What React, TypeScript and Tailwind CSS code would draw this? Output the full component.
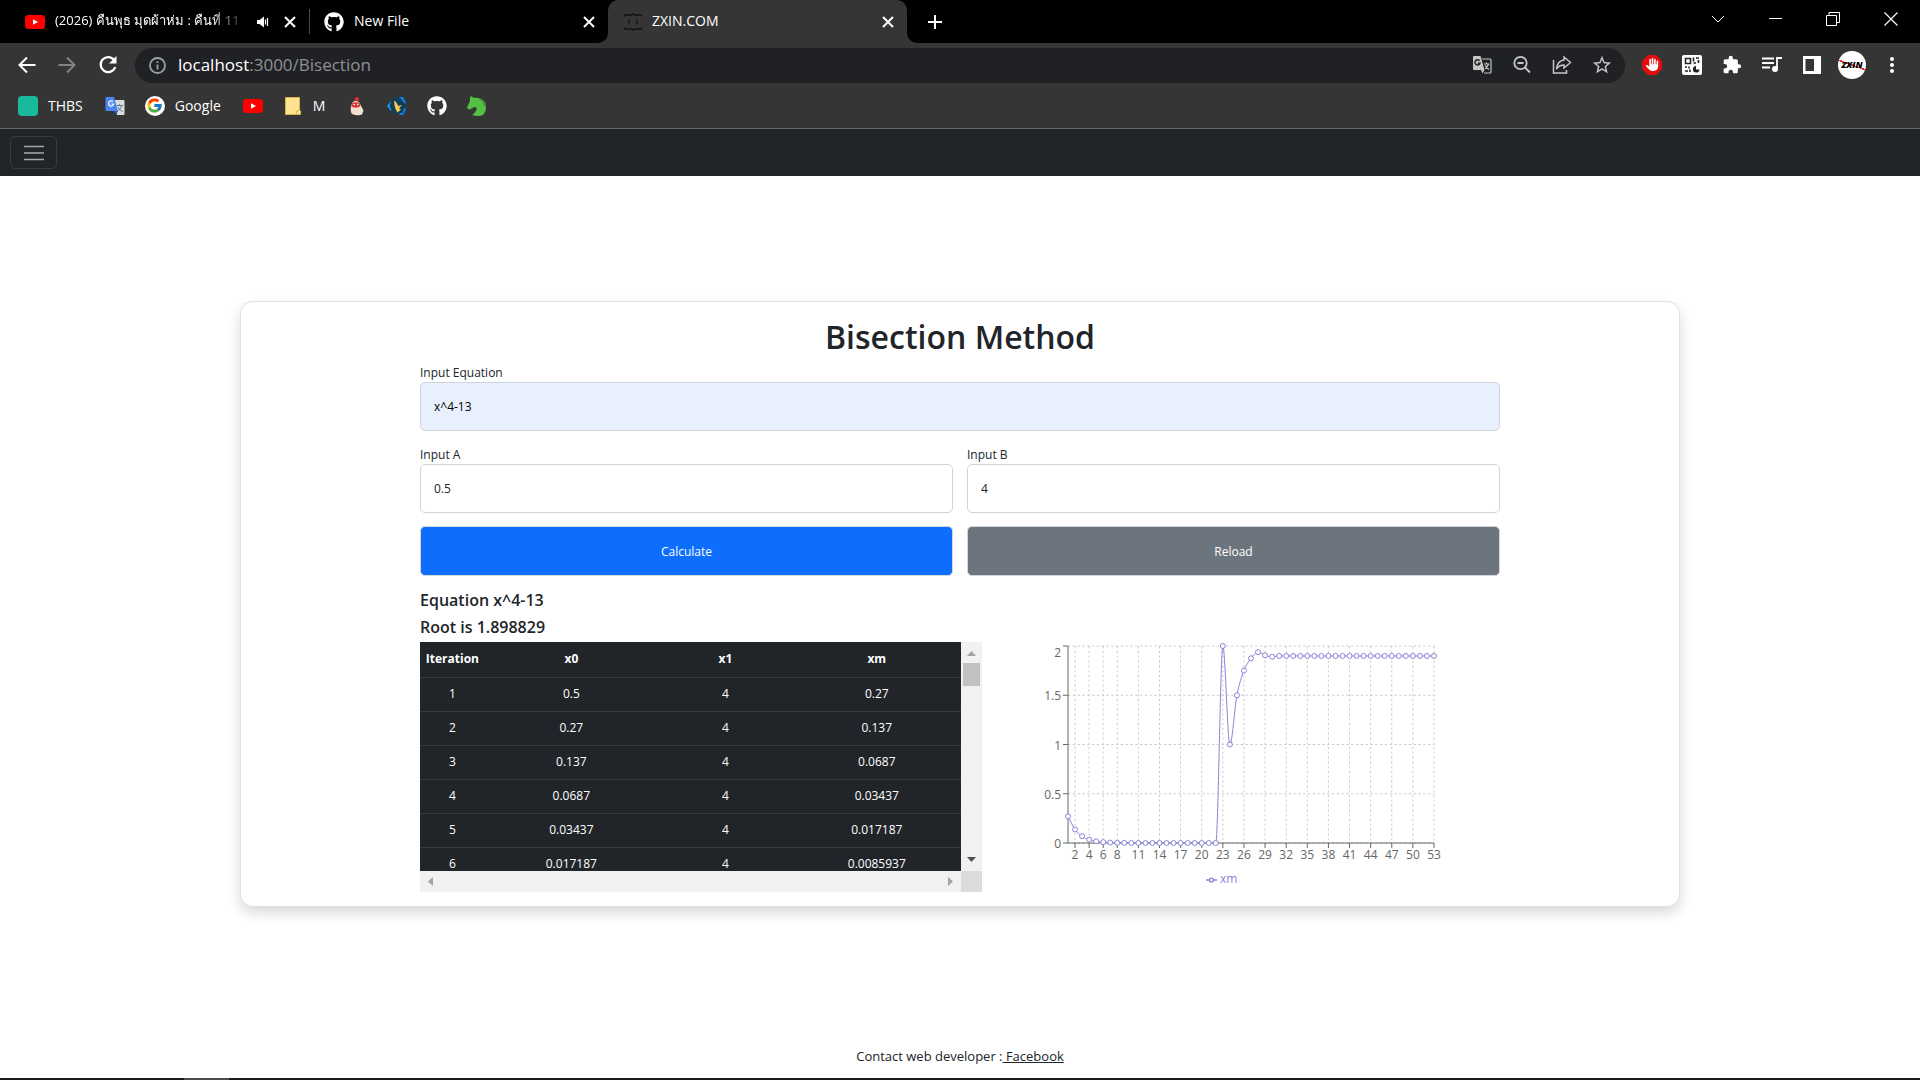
import React from "react";
import { FaGithub, FaHand } from "react-icons/fa6";
import { FcGoogle } from "react-icons/fc";
import { MdExtension, MdStarBorder } from "react-icons/md";

const rows: [string, string, string][] = [
  ["0.5", "4", "0.27"],
  ["0.27", "4", "0.137"],
  ["0.137", "4", "0.0687"],
  ["0.0687", "4", "0.03437"],
  ["0.03437", "4", "0.017187"],
  ["0.017187", "4", "0.0085937"],
];

const series: number[] = [
  0.27, 0.137, 0.0687, 0.03437, 0.017187, 0.0085937, 0.0043, 0.0021, 0.001,
  ...Array(13).fill(0),
  2, 1, 1.5, 1.75, 1.875, 1.9375, 1.90625, 1.890625, 1.8984,
  ...Array(22).fill(1.8988),
];

const xTicks = [2, 4, 6, 8, 11, 14, 17, 20, 23, 26, 29, 32, 35, 38, 41, 44, 47, 50, 53];
const yTicks = [0, 0.5, 1, 1.5, 2];

const LEFT = 66;
const RIGHT = 432;
const TOP = 4;
const BOTTOM = 201;
const px = (n: number) => LEFT + ((n - 1) * (RIGHT - LEFT)) / 52;
const py = (v: number) => BOTTOM - (v * (BOTTOM - TOP)) / 2;

/* Monotone cubic interpolation through the series */
function monotonePath(values: number[]) {
  const pts = values.map((v, i) => [px(i + 1), py(v)]);
  const h = pts[1][0] - pts[0][0];
  const slope = pts.slice(1).map((p, i) => (p[1] - pts[i][1]) / h);
  const m = pts.map((_, i) => {
    if (i === 0) return slope[0];
    if (i === pts.length - 1) return slope[i - 1];
    const a = slope[i - 1];
    const b = slope[i];
    if (a * b <= 0) return 0;
    return Math.sign(a) * 2 * Math.min(Math.abs(a), Math.abs(b), Math.abs(a + b) / 4);
  });
  return pts.reduce((d, p, i) => {
    if (i === 0) return `M${p[0]},${p[1]}`;
    const q = pts[i - 1];
    return `${d}C${q[0] + h / 3},${q[1] + (m[i - 1] * h) / 3} ${p[0] - h / 3},${p[1] - (m[i] * h) / 3} ${p[0]},${p[1]}`;
  }, "");
}

function Chart() {
  return (
    <svg width="444" height="250" viewBox="0 0 444 250" className="text-[12px]" role="img" aria-label="xm per iteration">
      <g stroke="#ccc" strokeDasharray="2.4 2.4" strokeWidth="1">
        {yTicks.map((v) => <line key={v} x1={LEFT} x2={RIGHT} y1={py(v)} y2={py(v)} />)}
        {xTicks.map((n) => <line key={n} x1={px(n)} x2={px(n)} y1={TOP} y2={BOTTOM} />)}
      </g>
      <g stroke="#666">
        <path d={`M${LEFT},${TOP}V${BOTTOM}H${RIGHT}`} fill="none" />
        {yTicks.map((v) => <line key={v} x1={LEFT - 5} x2={LEFT} y1={py(v)} y2={py(v)} />)}
        {xTicks.map((n) => <line key={n} x1={px(n)} x2={px(n)} y1={BOTTOM} y2={BOTTOM + 5} />)}
      </g>
      <g fill="#666">
        {yTicks.map((v) => (
          <text key={v} x={LEFT - 7} y={v === 2 ? 15 : py(v) + 5} textAnchor="end">{v}</text>
        ))}
        {xTicks.map((n) => (
          <text key={n} x={px(n)} y="217" textAnchor="middle">{n}</text>
        ))}
      </g>
      <path d={monotonePath(series)} fill="none" stroke="#8884d8" strokeWidth="1" />
      {series.map((v, i) => (
        <circle key={i} cx={px(i + 1)} cy={py(v)} r="2.5" fill="#fff" stroke="#8884d8" strokeWidth="1" />
      ))}
      <g stroke="#8884d8" strokeWidth="1.4" fill="none">
        <path d="M204,238h3.7M211.3,238h3.7" />
        <circle cx="209.5" cy="238" r="1.9" />
      </g>
      <text x="218" y="241" fill="#8884d8">xm</text>
    </svg>
  );
}

function YouTube() {
  return (
    <svg width="20" height="20" viewBox="0 0 20 20">
      <rect x="0" y="3" width="20" height="14" rx="3.5" fill="#f00" />
      <path d="M8 7.2v5.6l5-2.8z" fill="#fff" />
    </svg>
  );
}

function CloseX() {
  return (
    <svg width="12" height="12" viewBox="0 0 12 12" stroke="#fff" strokeWidth="2">
      <path d="M1 1l10 10M11 1L1 11" />
    </svg>
  );
}

function TranslateBadge() {
  return (
    <svg width="20" height="20" viewBox="0 0 20 20">
      <path d="M8 4h10.500a1 1 0 0 1 1 1v13a1 1 0 0 1-1 1H12z" fill="#dcdcdc" />
      <path d="M11.500 9.500h6.500M14.500 8v1.500M16.500 9.500c-.5 2.500-2 4.500-4 5.500M13 11c1 2 2.500 3.500 4.500 4.500" stroke="#5f7d86" fill="none" />
      <path d="M1.500 1h7.500l4 14H1.500a1 1 0 0 1-1-1V2a1 1 0 0 1 1-1z" fill="#4a86f0" />
      <path d="M9 15h4l-2 4z" fill="#2456b8" />
      <path d="M8 5.700A2.600 2.600 0 1 0 8.700 8H6.300" stroke="#fff" strokeWidth="1.200" fill="none" />
    </svg>
  );
}

function TranslateMono() {
  return (
    <svg width="20" height="20" viewBox="0 0 20 20">
      <path d="M10 4h8a1 1 0 0 1 1 1v12a1 1 0 0 1-1 1h-6" stroke="currentColor" fill="none" strokeWidth="1.200" />
      <path d="M12 9h5.500M14.500 7.500V9M16.500 9c-.5 2-1.500 3.500-3.500 4.500M13 10.500c1 1.800 2 3 4 4" stroke="currentColor" fill="none" strokeWidth="1.200" />
      <path d="M2 1h6.500l4 14H2a1 1 0 0 1-1-1V2a1 1 0 0 1 1-1zM9 15h3.500L10.500 18.500z" fill="currentColor" />
      <path d="M7.600 5.800A2.600 2.600 0 1 0 8 8.200H5.800" stroke="#202124" strokeWidth="1.500" fill="none" />
    </svg>
  );
}

function Tabs() {
  return (
    <div className="flex h-[43px] items-stretch bg-black text-[14px] text-white">
      <div className="flex w-[309px] items-center pl-[25px]">
        <YouTube />
        <span className="ml-[10px] w-[193px] overflow-hidden whitespace-nowrap pb-[2px] text-[13px] [mask-image:linear-gradient(90deg,#000_80%,transparent)]">
          (2026) คืนพุธ มุดผ้าห่ม : คืนที่ 11
        </span>
        <svg className="ml-2 shrink-0" width="14" height="14" viewBox="0 0 14 14" fill="#fff">
          <path d="M1 5h2.500L8 1.500v11L3.500 9H1z" />
          <path d="M9.500 4.500v5M11.500 3v8" stroke="#fff" strokeWidth="1.200" />
        </svg>
        <button aria-label="Close tab" className="ml-[14px]"><CloseX /></button>
      </div>
      <div className="my-[9px] w-px bg-[#4a4a4a]" />
      <div className="flex w-[298px] items-center pl-[14px] pr-[13px]">
        <FaGithub size={20} />
        <span className="ml-[10px] flex-1 pb-[2px]">New File</span>
        <button aria-label="Close tab"><CloseX /></button>
      </div>
      <div className="relative flex w-[299px] items-center rounded-t-[10px] bg-[#353535] pl-4 pr-[13px]">
        <svg className="absolute -left-[10px] bottom-0" width="10" height="10" viewBox="0 0 10 10"><path d="M10 0v10H0A10 10 0 0 0 10 0z" fill="#353535" /></svg>
        <svg className="absolute -right-[10px] bottom-0" width="10" height="10" viewBox="0 0 10 10"><path d="M0 0v10h10A10 10 0 0 1 0 0z" fill="#353535" /></svg>
        <svg width="18" height="18" viewBox="0 0 18 18" fill="none" stroke="#111" strokeWidth="1.300">
          <path d="M0 4V2.500L2 2h5l2-1 2 1h5l2 .5V4M0 14v1.500l2 .5h5l2 1 2-1h5l2-.5V14M5 6.500v5M13 6.500v5" />
        </svg>
        <span className="ml-[10px] flex-1 pb-[2px]">ZXIN.COM</span>
        <button aria-label="Close tab"><CloseX /></button>
      </div>
      <button aria-label="New tab" className="ml-[20px]">
        <svg width="16" height="16" viewBox="0 0 16 16" stroke="#fff" strokeWidth="2"><path d="M8 1v14M1 8h14" /></svg>
      </button>
      <div className="mb-[6px] ml-auto flex items-center gap-11 pr-[22px]">
        <button aria-label="Search tabs"><svg width="14" height="14" viewBox="0 0 14 14" fill="none" stroke="#fff"><path d="M1 4l6 6 6-6" /></svg></button>
        <button aria-label="Minimize"><svg width="13" height="13" viewBox="0 0 13 13" stroke="#fff"><path d="M0 6.500h13" /></svg></button>
        <button aria-label="Restore"><svg width="14" height="14" viewBox="0 0 14 14" fill="none" stroke="#fff"><path d="M.5 3.500h10v10H.5zM3 3.500v-3h10.500v10h-3" /></svg></button>
        <button aria-label="Close window"><svg width="14" height="14" viewBox="0 0 14 14" stroke="#fff" strokeWidth="1.200"><path d="M.5.5l13 13M13.500.5l-13 13" /></svg></button>
      </div>
    </div>
  );
}

function Toolbar() {
  return (
    <div className="flex h-[44px] items-center bg-[#353535] px-[18px]">
      <div className="flex w-[117px] items-center gap-[22px]">
        <button aria-label="Back"><svg width="18" height="18" viewBox="0 0 18 18" fill="none" stroke="#fff" strokeWidth="2"><path d="M17.500 9H2M9 1.500L1.500 9 9 16.500" /></svg></button>
        <button aria-label="Forward"><svg width="18" height="18" viewBox="0 0 18 18" fill="none" stroke="#848484" strokeWidth="2"><path d="M.5 9H16M9 1.500L16.500 9 9 16.500" /></svg></button>
        <button aria-label="Reload"><svg width="20" height="20" viewBox="0 0 20 20" fill="none" stroke="#fff" strokeWidth="2.200"><path d="M16.500 5.500A7.500 7.500 0 1 0 17.300 12" /><path d="M18.500 1v7.500H11z" fill="#fff" stroke="none" /></svg></button>
      </div>
      <div className="flex h-[35px] flex-1 items-center rounded-full bg-[#202124] pl-[14px] pr-[13px]">
        <svg width="17" height="17" viewBox="0 0 17 17" fill="none" stroke="#9aa0a6" strokeWidth="1.800"><circle cx="8.500" cy="8.500" r="7.500" /><path d="M8.500 7.500v5M8.500 4.300v1.800" /></svg>
        <a href="#" className="ml-3 flex-1 text-[17px] text-[#8f9194]"><span className="text-white">localhost</span>:3000/Bisection</a>
        <div className="flex items-center gap-5 text-[#c4c7c5]">
          <button aria-label="Translate"><TranslateMono /></button>
          <button aria-label="Zoom"><svg width="20" height="20" viewBox="0 0 20 20" fill="none" stroke="currentColor" strokeWidth="1.800"><circle cx="8.500" cy="8" r="6.200" /><path d="M13 12.500l5 5M5.500 8h6" /></svg></button>
          <button aria-label="Share">
            <svg width="20" height="20" viewBox="0 0 20 20" fill="none" stroke="currentColor" strokeWidth="1.500"><path d="M1.500 5v13h13v-3M12 2l6.500 5.500L12 13V10c-3 0-5.500 1-7.500 4C5 9 7.500 5.500 12 5z" /></svg>
          </button>
          <button aria-label="Bookmark" className="-mx-px"><MdStarBorder size={22} /></button>
        </div>
      </div>
      <div className="ml-[17px] flex items-center gap-5 text-white">
        <button aria-label="Ad blocker">
          <svg width="20" height="20" viewBox="0 0 20 20"><path d="M6 0h8l6 6v8l-6 6H6l-6-6V6z" fill="#e40d0d" /><FaHand x="4" y="3" size={13} color="#fff" /></svg>
        </button>
        <button aria-label="QR code">
          <svg width="20" height="20" viewBox="0 0 20 20"><rect width="20" height="20" rx="2" fill="#fff" /><g fill="none" stroke="#222" strokeWidth="1.600"><path d="M3.500 3.500h5v5h-5zM11.500 2.500v4M14 3h3M16.500 5v3M11.500 8h2.500M3 12h2M7 11.500v2M3 16h3M8 14.500v2.500" /></g><path d="M14 11a3.300 3.300 0 1 0 3.500 3.500H14z" fill="#222" /></svg>
        </button>
        <button aria-label="Extensions"><MdExtension size={20} /></button>
        <button aria-label="Media">
          <svg width="20" height="20" viewBox="0 0 20 20" fill="none" stroke="#fff" strokeWidth="1.800"><path d="M0 3.500h12M0 8h12M0 12.500h8M15 13.500V3h5" /><circle cx="13" cy="14" r="3" fill="#fff" stroke="none" /></svg>
        </button>
        <button aria-label="Side panel"><svg width="20" height="20" viewBox="0 0 20 20"><path fillRule="evenodd" d="M1 1h18v18H1zM3.500 4v12H12V4z" fill="#fff" /></svg></button>
        <button aria-label="Profile" className="-mx-1 flex size-7 items-center justify-center rounded-full bg-white bg-[linear-gradient(20deg,transparent_48%,#e33_48%,#e33_52%,transparent_52%)] text-[9px] font-extrabold italic text-black">ZXIN</button>
        <button aria-label="Menu"><svg width="20" height="18" viewBox="0 0 20 18" fill="#fff"><circle cx="10" cy="3" r="2" /><circle cx="10" cy="9" r="2" /><circle cx="10" cy="15" r="2" /></svg></button>
      </div>
    </div>
  );
}

function Bookmarks() {
  return (
    <nav className="flex h-[42px] items-center gap-5 border-b border-[#66686a] bg-[#353535] pb-1 pl-[18px] text-[14px] text-white">
      <a href="#" className="flex items-center gap-[10px] pr-[2px]"><span className="size-5 rounded bg-[#18b99d]" />THBS</a>
      <a href="#" aria-label="Translate"><TranslateBadge /></a>
      <a href="#" className="flex items-center gap-[10px] pr-[2px]"><span className="flex size-5 items-center justify-center rounded-full bg-white"><FcGoogle size={17} /></span>Google</a>
      <a href="#" aria-label="YouTube"><YouTube /></a>
      <a href="#" className="flex items-center gap-[10px] pr-[2px]">
        <svg width="20" height="20" viewBox="0 0 20 20"><path d="M2.500 1.500h14V14l1 1v3.500h-15z" fill="#ffe391" stroke="#d9b44a" /><path d="M13.500 18.500V15l3-1" fill="none" stroke="#d9b44a" /></svg>M
      </a>
      <a href="#" aria-label="Chicken">
        <svg width="20" height="20" viewBox="0 0 20 20"><path d="M4.500 17.500C3 13 4 8 6.500 5.500c3-1.500 6 0 7 3.500l3 5.500-1.500 4c-2 1.200-8 1.200-10.500-1z" fill="#f3e0d0" /><path d="M7.500 5c0-2 .5-4 2.500-4 2 .5 2.500 2 2 4z" fill="#d92b2b" /><ellipse cx="8.800" cy="9" rx="4.500" ry="2.800" fill="#dc3f3b" /><path d="M6.500 8.500h1.500M10 8.500h1.500" stroke="#fff" /></svg>
      </a>
      <a href="#" aria-label="Hexagon">
        <svg width="20" height="20" viewBox="0 0 20 20"><path d="M4 5L0 10l4 5 3-5z" fill="#16a2e8" /><path d="M12 1h4l3 6-3 2zM12 19h4l3-6-3-2z" fill="#0b86f0" /><path d="M5 2.500l8-1 5.500 7-3 8.500-9 1L2.500 10z" fill="#0e3e5c" /><path d="M7 4.500c.5 4 .5 8 3.500 12L14 13.500l-2-1 3-3.500-4 1C10.500 8 9.500 6 7 4.500z" fill="#f8c94b" /></svg>
      </a>
      <a href="#" aria-label="GitHub"><FaGithub size={20} /></a>
      <a href="#" aria-label="Horse">
        <svg width="20" height="20" viewBox="0 0 20 20" fill="#54c044"><path d="M4 0l3 2c5-1 10.500 2 11.500 6 .8 4 .5 8-2.500 11-3 1.300-7 1.200-11 0 3-2 5-4.500 4.500-7.500C7.500 11 5.500 11.500 4 13l-2.500.5L0 11.500 3 5V2z" /><path d="M12.500 3c3 1.500 4.800 4 5 7" stroke="#353535" strokeWidth=".6" fill="none" /></svg>
      </a>
    </nav>
  );
}

function Field({ id, label, value, filled }: { id: string; label: string; value: string; filled?: boolean }) {
  return (
    <div className="flex flex-1 flex-col">
      <label htmlFor={id} className="text-[12px] leading-[19px]">{label}</label>
      <input
        id={id}
        defaultValue={value}
        className={`h-[49px] w-full rounded-[5px] border border-[#ced4da] px-[13px] text-[12px] ${filled ? "bg-[#e8f0fe] text-black" : "bg-white"}`}
      />
    </div>
  );
}

const action = "h-[50px] flex-1 rounded-[5px] border border-[#d3d6da] pt-px text-[12px] text-white";

function ResultTable() {
  return (
    <div className="grid h-[250px] grid-cols-[1fr_21px] grid-rows-[1fr_21px]">
      <div className="overflow-hidden bg-[#212529]">
        <table className="w-full table-fixed text-center text-[12px] text-white">
          <colgroup>
            <col className="w-[12%]" />
            <col className="w-[32%]" />
            <col className="w-[25%]" />
            <col className="w-[31%]" />
          </colgroup>
          <thead>
            <tr className="h-[35px] border-b border-[#373b3e] font-bold">
              {["Iteration", "x0", "x1", "xm"].map((h) => <th key={h} scope="col">{h}</th>)}
            </tr>
          </thead>
          <tbody>
            {rows.map((r, i) => (
              <tr key={i} className="h-[34px] border-b border-[#373b3e]">
                <td>{i + 1}</td>
                {r.map((c, j) => <td key={j}>{c}</td>)}
              </tr>
            ))}
          </tbody>
        </table>
      </div>
      <div className="flex flex-col items-center bg-[#f1f1f1]">
        <svg width="21" height="21" viewBox="0 0 21 21" fill="#a3a3a3"><path d="M6 14h9l-4.500-5z" /></svg>
        <div className="h-[23px] w-[17px] bg-[#c1c1c1]" />
        <svg className="mt-auto" width="21" height="21" viewBox="0 0 21 21" fill="#505050"><path d="M6 7h9l-4.500 5z" /></svg>
      </div>
      <div className="flex items-center justify-between bg-[#f1f1f1]">
        <svg width="21" height="21" viewBox="0 0 21 21" fill="#a3a3a3"><path d="M13 6v9l-5-4.500z" /></svg>
        <svg width="21" height="21" viewBox="0 0 21 21" fill="#a3a3a3"><path d="M8 6v9l5-4.500z" /></svg>
      </div>
      <div className="bg-[#dcdcdc]" />
    </div>
  );
}

export default function App() {
  return (
    <div className="flex min-h-screen flex-col bg-white font-['Open_Sans','Noto_Sans',sans-serif] text-[#212529]">
      <header>
        <Tabs />
        <Toolbar />
        <Bookmarks />
      </header>
      <nav className="flex h-[47px] items-center bg-[#212529] px-[10px]">
        <button aria-label="Toggle navigation" className="flex h-[33px] w-[47px] items-center justify-center rounded-[5px] border border-white/10">
          <svg width="22" height="16" viewBox="0 0 22 16" stroke="#fff" strokeOpacity="0.6" strokeWidth="1.600"><path d="M1 1.500h20M1 8h20M1 14.500h20" /></svg>
        </button>
      </nav>
      <main className="flex flex-1 items-center justify-center">
        <section className="flex w-3/4 justify-center rounded-[13px] bg-white pb-[15px] pt-[17px] shadow-[0_6px_13px_rgba(0,0,0,0.15)] ring-1 ring-inset ring-[#dfe0e1]">
          <div className="w-3/4">
            <h1 className="text-center text-[32px] font-semibold leading-[38px]">Bisection Method</h1>
            <div className="mt-[7px] flex"><Field id="eq" label="Input Equation" value="x^4-13" filled /></div>
            <div className="mt-[14px] flex gap-[14px]">
              <Field id="a" label="Input A" value="0.5" />
              <Field id="b" label="Input B" value="4" />
            </div>
            <div className="mt-[13px] flex gap-[14px]">
              <button className={`${action} bg-[#0d6efd]`}>Calculate</button>
              <button className={`${action} bg-[#6c757d]`}>Reload</button>
            </div>
            <div className="mb-px mt-[11px] text-[16px] font-semibold leading-[27px]">
              <h2>Equation x^4-13</h2>
              <h2>Root is 1.898829</h2>
            </div>
            <div className="flex">
              <div className="w-[52%]"><ResultTable /></div>
              <div className="flex-1 pl-5"><Chart /></div>
            </div>
          </div>
        </section>
      </main>
      <footer className="h-[46px] pt-[15px] text-center text-[13px] leading-[18px]">
        Contact web developer :<a href="#" className="whitespace-pre underline"> Facebook</a>
      </footer>
      <div className="flex h-[2px] bg-[#1b1a1d] pl-[184px]"><div className="w-[45px] bg-[#4b4a4c]" /></div>
    </div>
  );
}
